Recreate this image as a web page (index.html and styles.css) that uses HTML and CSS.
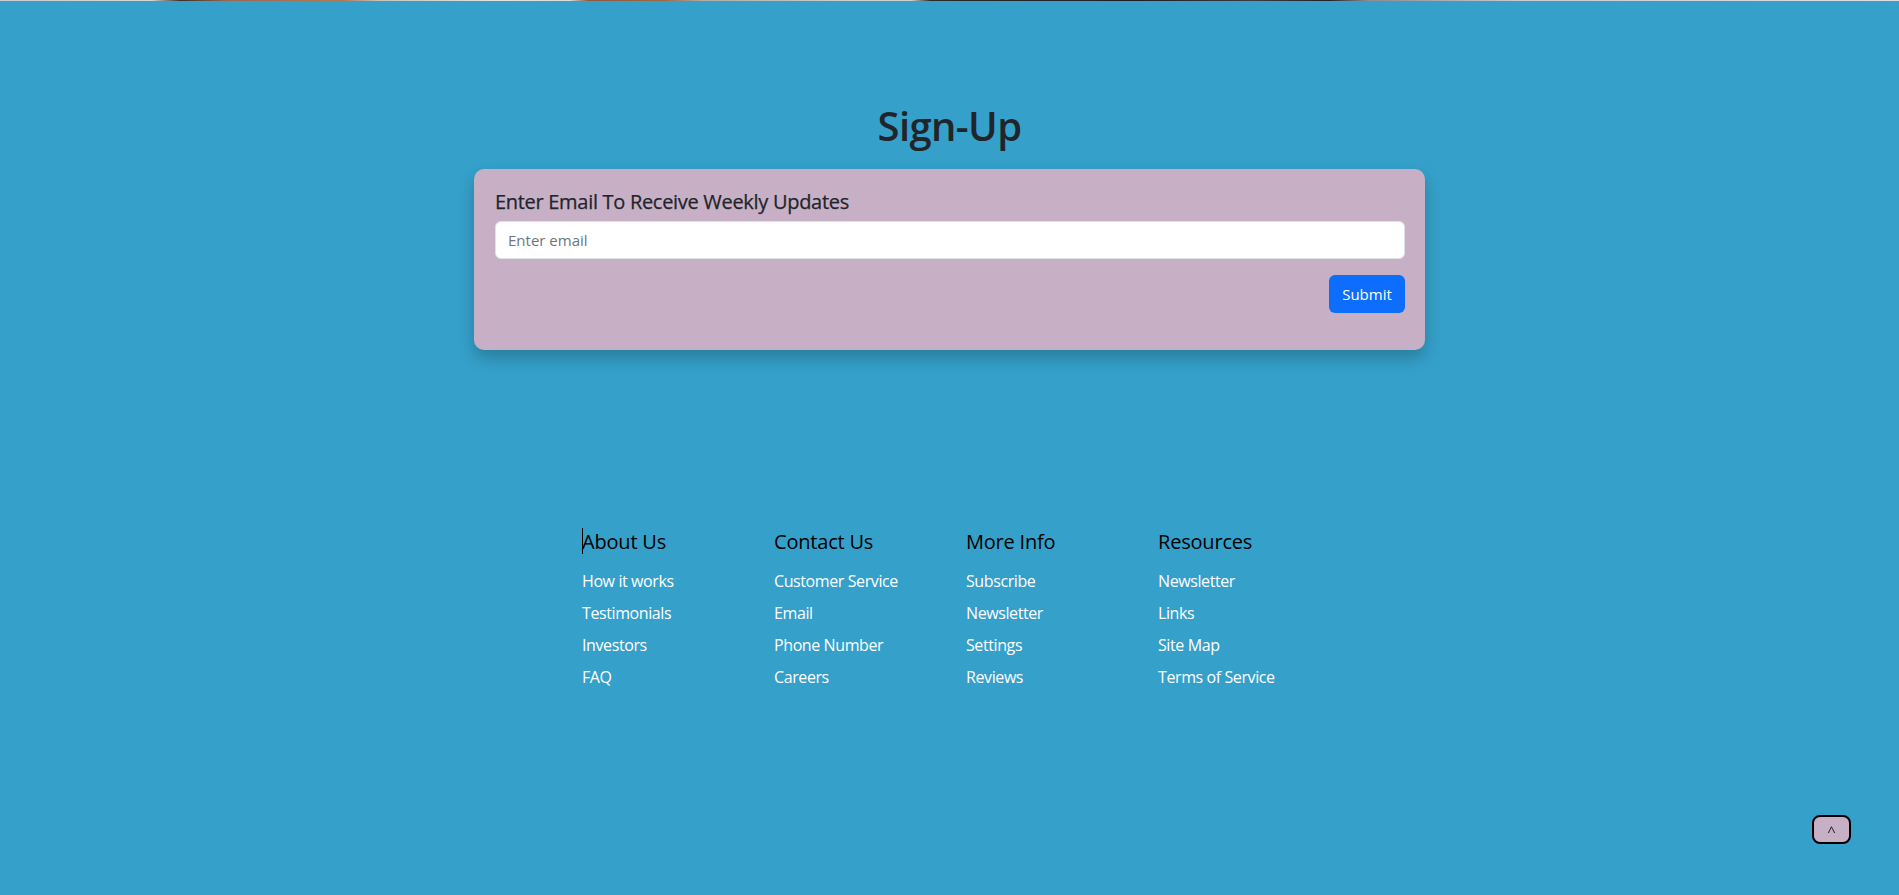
FILE: index.html
```html
<!DOCTYPE html>
<html lang="en">
<head>
<meta charset="utf-8">
<title>Sign-Up</title>
<link rel="stylesheet" href="styles.css">
</head>
<body>
<div class="top-strip"></div>
<main class="signup">
  <h1 class="signup-title">Sign-Up</h1>
  <form class="signup-card">
    <label class="signup-label" for="email">Enter Email To Receive Weekly Updates</label>
    <input class="signup-input" id="email" type="email" placeholder="Enter email">
    <div class="signup-actions">
      <button class="btn-submit" type="button">Submit</button>
    </div>
  </form>
</main>
<footer class="site-footer">
  <div class="footer-cols">
    <div class="footer-col">
      <h3 class="footer-head caret">About Us</h3>
      <a class="footer-link" href="#">How it works</a>
      <a class="footer-link" href="#">Testimonials</a>
      <a class="footer-link" href="#">Investors</a>
      <a class="footer-link" href="#">FAQ</a>
    </div>
    <div class="footer-col">
      <h3 class="footer-head">Contact Us</h3>
      <a class="footer-link" href="#">Customer Service</a>
      <a class="footer-link" href="#">Email</a>
      <a class="footer-link" href="#">Phone Number</a>
      <a class="footer-link" href="#">Careers</a>
    </div>
    <div class="footer-col">
      <h3 class="footer-head">More Info</h3>
      <a class="footer-link" href="#">Subscribe</a>
      <a class="footer-link" href="#">Newsletter</a>
      <a class="footer-link" href="#">Settings</a>
      <a class="footer-link" href="#">Reviews</a>
    </div>
    <div class="footer-col">
      <h3 class="footer-head">Resources</h3>
      <a class="footer-link" href="#">Newsletter</a>
      <a class="footer-link" href="#">Links</a>
      <a class="footer-link" href="#">Site Map</a>
      <a class="footer-link" href="#">Terms of Service</a>
    </div>
  </div>
</footer>
<button class="to-top" type="button">^</button>
</body>
</html>
```
FILE: styles.css
```css
* { box-sizing: border-box; }
html, body {
  margin: 0;
  padding: 0;
}
body {
  background: #35a0ca;
  font-family: "Open Sans", "Noto Sans", sans-serif;
  color: #212529;
  min-height: 895px;
}
.top-strip {
  height: 1px;
  background: linear-gradient(90deg,
    #c9cdd0 0%, #d6d6d4 8%, #3a2e2a 9.5%, #9a6a4e 12%, #b07a58 18%, #c8c4be 20%,
    #e2e2e2 26%, #dcdcdc 30%, #8c5a3c 31%, #9c6a48 35%, #b0aca8 37%, #d0d0d0 45%,
    #cfcfcf 48%, #2a2a2c 49%, #1e2024 60%, #3a3c40 66%, #202226 70%, #8a8c90 72%,
    #c8ccd0 80%, #dde0e2 100%);
}
.signup {
  padding-top: 101px;
}
.signup-title {
  margin: 0 0 19px;
  text-align: center;
  font-size: 40px;
  line-height: 48px;
  font-weight: 600;
  color: #212529;
  letter-spacing: -0.6px;
}
.signup-card {
  width: 951px;
  margin: 0 auto;
  background: #c7b0c6;
  border-radius: 10px;
  padding: 21px 20px 20px 21px;
  box-shadow: 0 8px 16px rgba(0, 0, 0, 0.22);
  display: flex;
  flex-direction: column;
}
.signup-label {
  font-size: 20px;
  line-height: 24px;
  font-weight: 500;
  color: #212529;
  margin-bottom: 7px;
  letter-spacing: -0.3px;
  -webkit-text-stroke: 0.25px #212529;
}
.signup-input {
  height: 38px;
  width: 100%;
  border: 1px solid #dee2e6;
  border-radius: 6px;
  padding: 6px 12px;
  font-family: inherit;
  font-size: 15px;
  color: #212529;
  background: #fff;
}
.signup-input::placeholder {
  color: #6c757d;
}
.signup-actions {
  display: flex;
  justify-content: flex-end;
  margin: 16px 0 17px;
}
.btn-submit {
  height: 38px;
  width: 76px;
  background: #0d6efd;
  color: #fff;
  border: none;
  border-radius: 6px;
  font-family: inherit;
  font-size: 15px;
  padding: 0;
}
.site-footer {
  padding-top: 180px;
}
.footer-cols {
  display: flex;
  width: 768px;
  margin-left: calc(50% - 367.5px);
}
.footer-col {
  width: 192px;
  display: flex;
  flex-direction: column;
  align-items: flex-start;
}
.footer-head {
  margin: 0 0 15px;
  font-size: 20px;
  line-height: 24px;
  font-weight: 400;
  color: #000;
  letter-spacing: -0.2px;
}
.caret {
  position: relative;
}
.caret::before {
  content: "";
  position: absolute;
  left: 0;
  top: -2px;
  width: 1px;
  height: 26px;
  background: #000;
}
.footer-link {
  font-size: 16px;
  line-height: 24px;
  color: #fff;
  text-decoration: none;
  margin-bottom: 8px;
  letter-spacing: -0.4px;
}
.to-top {
  position: fixed;
  right: 48px;
  bottom: 51px;
  width: 39px;
  height: 29px;
  background: #c7b0c6;
  border: 2px solid #000;
  border-radius: 8px;
  font-family: inherit;
  font-size: 15px;
  color: #212529;
  padding: 4px 0 0;
  line-height: 1;
}
```
